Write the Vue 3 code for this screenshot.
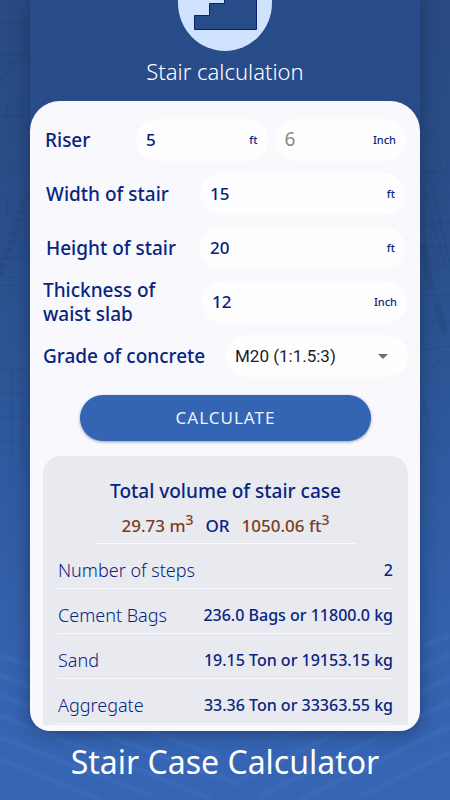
<script setup>
import { ref } from 'vue'

const riserFeet = ref('5')
const riserInch = ref('')
const width = ref('15')
const height = ref('20')
const thickness = ref('12')
const grade = ref('M20 (1:1.5:3)')

const results = [
  { name: 'Number of steps', value: '2' },
  { name: 'Cement Bags', value: '236.0 Bags or 11800.0 kg' },
  { name: 'Sand', value: '19.15 Ton or 19153.15 kg' },
  { name: 'Aggregate', value: '33.36 Ton or 33363.55 kg' },
]
</script>

<template>
  <div class="page">
    <svg class="backdrop" viewBox="0 0 450 800" preserveAspectRatio="xMidYMid slice" aria-hidden="true">
      <g fill="none" stroke="#173560" stroke-opacity="0.22">
        <path d="M0 23H24M0 54H23V62H0M0 104H30M0 116H30M7 104V118M19 104V118M0 163H30M0 171H30M0 258H30M0 277H30M0 285H30M22 98V118M7 195V217M22 365V470M12 370V460M0 370H30M0 394H30M0 418H30M0 440H30" />
        <path d="M0 80Q14 66 24 52M0 58L12 54M0 82L22 60" />
        <path d="M420 110L424 106M420 155L434 127M420 190L450 148M420 208L448 165M427 170L450 262M420 175L446 268M420 172L450 173M420 200H450M420 226L450 222M420 247L450 248M420 264H450M420 295H450M420 322H450M420 350L450 346M424 208V300M432 230L444 212M420 340L436 320M423 400L430 430M420 380L440 360" />
      </g>
      <g fill="none" stroke="#173560" stroke-opacity="0.18">
        <path stroke-width="7" stroke-dasharray="5 3" d="M0 275L28 192" />
        <path stroke-width="7" d="M423 243L431 290M436 304L446 335" />
      </g>
      <g fill="none" stroke="#4a7ac8" stroke-opacity="0.22" stroke-width="6">
        <path d="M0 675L220 757M0 695L240 785M0 715L210 798M0 737L150 795M0 759L100 800M0 655L40 669" />
        <path d="M450 635L420 648M450 655L280 738M450 678L240 780M450 702L260 796M450 726L300 800M450 752L360 797" />
      </g>
    </svg>

    <main class="phone">
      <header class="top">
        <div class="badge">
          <svg viewBox="0 0 94 96" aria-hidden="true">
            <path d="M16.500 74.500V60.500H31.500V48.500H46.500V36.500H61.500V24.500H78.500V74.500Z" fill="#284c89" stroke="#08207c" stroke-width="1" />
          </svg>
        </div>
        <h1>Stair calculation</h1>
      </header>

      <section class="sheet">
        <form class="form" @submit.prevent>
          <div class="row riser">
            <label for="riser-ft">Riser</label>
            <div class="pill">
              <input id="riser-ft" v-model="riserFeet" type="text" inputmode="decimal" />
              <span>ft</span>
            </div>
            <div class="pill">
              <input id="riser-in" v-model="riserInch" type="text" inputmode="decimal" placeholder="6" aria-label="Riser inches" />
              <span>Inch</span>
            </div>
          </div>
          <div class="row">
            <label for="width">Width of stair</label>
            <div class="pill">
              <input id="width" v-model="width" type="text" inputmode="decimal" />
              <span>ft</span>
            </div>
          </div>
          <div class="row">
            <label for="height">Height of stair</label>
            <div class="pill">
              <input id="height" v-model="height" type="text" inputmode="decimal" />
              <span>ft</span>
            </div>
          </div>
          <div class="row thick">
            <label for="thickness">Thickness of<br />waist slab</label>
            <div class="pill">
              <input id="thickness" v-model="thickness" type="text" inputmode="decimal" />
              <span>Inch</span>
            </div>
          </div>
          <div class="row grade">
            <label for="grade">Grade of concrete</label>
            <div class="pill">
              <select id="grade" v-model="grade">
                <option>M20 (1:1.5:3)</option>
                <option>M15 (1:2:4)</option>
              </select>
              <i class="caret"></i>
            </div>
          </div>
          <button type="submit">CALCULATE</button>
        </form>

        <section class="results">
          <h2>Total volume of stair case</h2>
          <p class="volume">
            <span>29.73 m<sup>3</sup></span>
            <b>OR</b>
            <span>1050.06 ft<sup>3</sup></span>
          </p>
          <dl>
            <div v-for="item in results" :key="item.name">
              <dt>{{ item.name }}</dt>
              <dd>{{ item.value }}</dd>
            </div>
          </dl>
        </section>
      </section>
    </main>

    <p class="caption">Stair Case Calculator</p>
  </div>
</template>

<style>
body {
  margin: 0;
}
</style>

<style scoped>
.page {
  position: relative;
  min-height: 100vh;
  overflow: hidden;
  background: linear-gradient(#284a80, #2a4f8a 30%, #2f5a9f 58%, #3563b0 85%, #3665b4);
  font-family: "Noto Sans", "Open Sans", sans-serif;
  color: #08257f;
}
.backdrop {
  position: absolute;
  inset: 0;
  width: 100%;
  height: 100%;
}
.phone {
  position: relative;
  margin: 0 30px;
  border-radius: 0 0 20px 20px;
  background: #284c89;
  box-shadow: 0 2px 18px rgba(20, 40, 80, 0.6);
}
.top {
  display: flex;
  flex-direction: column;
  align-items: center;
  height: 101px;
}
.badge {
  flex: none;
  width: 94px;
  height: 96px;
  margin-top: -45px;
  border-radius: 50%;
  background: #cfe3fe;
}
.badge svg {
  display: block;
  width: 94px;
}
h1 {
  margin: 5px 0 0;
  font-size: 22px;
  line-height: 30px;
  font-weight: 300;
  color: #fff;
}
.sheet {
  padding: 12px 12px 6px 13px;
  border-radius: 30px 30px 20px 20px;
  background: #f8f8fd;
}
.row {
  display: grid;
  grid-template-columns: 154px 1fr;
  align-items: center;
  height: 54px;
  padding: 0 3px;
}
.row.riser {
  grid-template-columns: 84px 1fr 1fr;
  column-gap: 7px;
  padding: 0 2px;
}
.row.thick {
  grid-template-columns: 159px 1fr;
  padding: 0 1px 0 0;
}
.row.grade {
  grid-template-columns: 182px 1fr;
  padding: 0;
}
label {
  font-size: 19px;
  line-height: 24px;
  font-weight: 500;
  white-space: nowrap;
}
.pill {
  display: flex;
  align-items: center;
  height: 42px;
  min-width: 0;
  box-sizing: border-box;
  padding: 0 10px;
  border-radius: 21px;
  background: #fefefe;
}
.pill input {
  flex: 1;
  min-width: 0;
  width: 0;
  padding: 0;
  border: 0;
  outline: 0;
  background: none;
  font: 500 17px/24px "Noto Sans", sans-serif;
  color: #08207c;
}
.pill input::placeholder {
  font-weight: 400;
  font-size: 19px;
  color: #8c8589;
  opacity: 1;
}
.pill span {
  font-size: 11px;
  line-height: 16px;
  font-weight: 500;
}
.pill select {
  flex: 1;
  min-width: 0;
  appearance: none;
  padding: 0;
  border: 0;
  outline: 0;
  background: none;
  font: 400 17px/24px Roboto, sans-serif;
  color: #1c1a2a;
}
.caret {
  width: 0;
  margin-right: 10px;
  border: 5px solid transparent;
  border-top-color: #7a6a6a;
  border-bottom: 0;
}
button {
  display: block;
  width: calc(100% - 74px);
  height: 46px;
  margin: 12px 37px 15px;
  padding: 0;
  border: 0;
  border-radius: 23px;
  background: #3464b4;
  box-shadow: 0 1px 3px rgba(20, 40, 90, 0.45);
  font: 400 17px/24px "Noto Sans", sans-serif;
  letter-spacing: 1px;
  color: #edf1fb;
}
.results {
  padding: 20px 15px 1px;
  border-radius: 18px 18px 0 0;
  background: #e9e9f0;
}
h2 {
  margin: 0;
  text-align: center;
  font-size: 19px;
  line-height: 30px;
  font-weight: 500;
}
.volume {
  display: flex;
  justify-content: center;
  gap: 12px;
  height: 37px;
  margin: 0 37px;
  border-bottom: 1px solid #fafafe;
  font-size: 17px;
  line-height: 40px;
  font-weight: 500;
  color: #7b4022;
}
.volume b {
  font-weight: 500;
  color: #08257f;
}
sup {
  font-size: 14px;
  line-height: 0;
}
dl {
  margin: 0;
}
dl div {
  display: flex;
  justify-content: space-between;
  height: 44px;
  border-bottom: 1px solid #fafafe;
  line-height: 52px;
  white-space: nowrap;
}
dt {
  font-size: 18px;
  font-weight: 300;
}
dd {
  margin: 0;
  font-size: 16px;
  font-weight: 500;
}
.caption {
  position: relative;
  margin: 10px 0 0;
  text-align: center;
  font-size: 32px;
  line-height: 42px;
  color: #fff;
}
</style>
